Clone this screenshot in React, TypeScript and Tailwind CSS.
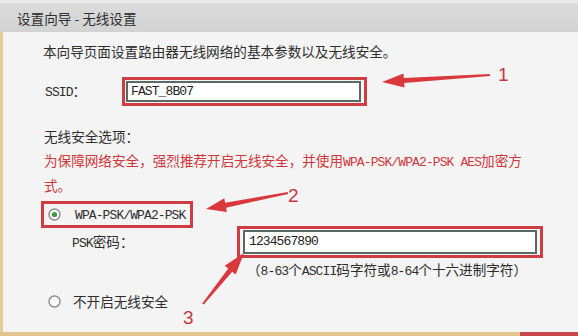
import React from "react";

const Mono = ({ children }: { children: React.ReactNode }) => (
  <span className="font-['Liberation_Mono',monospace] text-[13px] tracking-[-0.9px]">{children}</span>
);

const Radio = ({ checked }: { checked?: boolean }) => (
  <svg width="13" height="13" viewBox="0 0 13 13" className="shrink-0">
    <circle cx="6.5" cy="6.5" r="5.5" fill="#fbfbfb" stroke="#8c8c8c" strokeWidth="1.4" />
    {checked && <circle cx="6.5" cy="6.5" r="2.6" fill="#3f9d3f" />}
  </svg>
);

export default function App() {
  return (
    <div className="relative w-[578px] h-[336px] overflow-hidden bg-[#f4f4f4] flex flex-col font-['Noto_Sans_CJK_SC',sans-serif] text-[13.6px] text-[#2e2e2e]">
      <header className="h-[32px] shrink-0 border-t-[3px] border-[#ececec] bg-gradient-to-b from-[#dbdbdb] to-[#d2d2d2] pl-[17px] flex items-center leading-[20px]">
        设置向导 - 无线设置
      </header>

      <main className="flex-1 border-l-[3px] border-[#e8cd94] pl-[40px] pt-[9px] flex flex-col">
        <p className="leading-[20px]">本向导页面设置路由器无线网络的基本参数以及无线安全。</p>

        <div className="mt-[16px] flex items-center pl-[2px]">
          <span className="w-[77px] leading-[20px]">
            <Mono>SSID</Mono>：
          </span>
          <div className="w-[245px] h-[29px] border-[3px] border-[#cf3c41] pl-[1px] pr-[3px] py-[1px]">
            <div className="h-full border-2 border-[#5a6866] bg-white flex items-center pl-[3px] text-[#222]">
              <Mono>FAST_8B07</Mono>
            </div>
          </div>
        </div>

        <p className="mt-[20px] leading-[20px] pl-[1px]">无线安全选项：</p>
        <p className="mt-[3px] leading-[23px] text-[#d1363b] pl-[1px]">
          为保障网络安全，强烈推荐开启无线安全，并使用<Mono>WPA-PSK/WPA2-PSK AES</Mono>加密方
          <br />
          式。
        </p>

        <div className="mt-[4px] -ml-[2px] w-[152px] h-[27px] border-[3px] border-[#cf3c41] flex items-center pl-[4px]">
          <Radio checked />
          <span className="ml-[14px] leading-[20px]">
            <Mono>WPA-PSK/WPA2-PSK</Mono>
          </span>
        </div>

        <div className="-mt-[2px] flex items-center h-[32px]">
          <span className="pl-[29px] w-[194px] leading-[20px]">
            <Mono>PSK</Mono>密码：
          </span>
          <div className="w-[306px] h-[32px] border-[3px] border-[#cf3c41] px-[3px] py-[1px]">
            <div className="h-full border-2 border-[#5a6866] bg-white flex items-center pl-[4px] text-[#222]">
              <Mono>1234567890</Mono>
            </div>
          </div>
        </div>

        <p className="mt-[1px] pl-[204px] leading-[20px]">
          （<Mono>8-63</Mono>个<Mono>ASCII</Mono>码字符或<Mono>8-64</Mono>个十六进制字符）
        </p>

        <div className="mt-[9px] flex items-center h-[20px] pl-[5px]">
          <Radio />
          <span className="ml-[12px] leading-[20px]">不开启无线安全</span>
        </div>
      </main>

      <div className="h-[4px] shrink-0 flex">
        <div className="flex-1 bg-[#e3c68e]" />
        <div className="w-[58px] bg-[#c9464b]" />
      </div>

      <svg className="absolute inset-0 pointer-events-none" width="578" height="336" viewBox="0 0 578 336">
        <polygon
          fill="#d9383d"
          points="382,82 404.5,87.6 404.2,83.1 490.1,76 489.9,74 403.8,78.1 403.5,73.6"
        />
        <polygon
          fill="#d9383d"
          points="206,209 226.9,212.1 226.1,207.7 288.2,194 287.8,192 225.1,202.7 224.3,198.3"
        />
        <polygon
          fill="#d9383d"
          points="244,253 235.7,274.6 232.2,271.8 203.8,304.6 202.2,303.4 228.3,268.6 224.7,265.8"
        />
      </svg>

      <div className="absolute left-[498px] top-[65px] font-['Liberation_Sans',sans-serif] text-[19px] leading-none text-[#c9373c]">1</div>
      <div className="absolute left-[288px] top-[186px] font-['Liberation_Sans',sans-serif] text-[19px] leading-none text-[#c9373c]">2</div>
      <div className="absolute left-[183px] top-[308px] font-['Liberation_Sans',sans-serif] text-[19px] leading-none text-[#c9373c]">3</div>
    </div>
  );
}
